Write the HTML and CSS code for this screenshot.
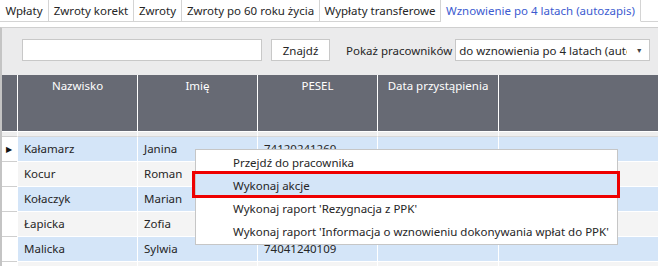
FILE: index.html
```html
<!DOCTYPE html>
<html lang="pl">
<head>
  <meta charset="UTF-8" />
  <title>Wznowienie po 4 latach</title>
  <link rel="stylesheet" href="styles.css">
</head>
<body>

  <div class="tabs">
    <div class="tab t1">Wpłaty</div>
    <div class="tab t2">Zwroty korekt</div>
    <div class="tab t3">Zwroty</div>
    <div class="tab t4">Zwroty po 60 roku życia</div>
    <div class="tab t5">Wypłaty transferowe</div>
    <div class="tab t6 active">Wznowienie po 4 latach (autozapis)</div>
    <div class="tab-rest"></div>
  </div>
  <div class="strip"></div>

  <div class="panel">
    <div class="toolbar">
      <input type="text" class="search">
      <button class="find">Znajdź</button>
      <span class="show-label">Pokaż pracowników</span>
      <div class="select">
        <span class="value">do wznowienia po 4 latach (autozapis)</span>
        <span class="arrow">▼</span>
      </div>
    </div>

    <div class="grid">
      <div class="row head">
        <div class="rh"></div>
        <div class="cell">Nazwisko</div>
        <div class="cell">Imię</div>
        <div class="cell">PESEL</div>
        <div class="cell">Data przystąpienia</div>
        <div class="cell"></div>
      </div>
      <div class="row filter">
        <div class="rh"></div>
        <div class="cell"></div>
        <div class="cell"></div>
        <div class="cell"></div>
        <div class="cell"></div>
        <div class="cell"></div>
      </div>
      <div class="row blue">
        <div class="rh"><span class="current">▶</span></div>
        <div class="cell">Kałamarz</div>
        <div class="cell">Janina</div>
        <div class="cell">74120241260</div>
        <div class="cell"></div>
        <div class="cell"></div>
      </div>
      <div class="row grey">
        <div class="rh"></div>
        <div class="cell">Kocur</div>
        <div class="cell">Roman</div>
        <div class="cell"></div>
        <div class="cell"></div>
        <div class="cell"></div>
      </div>
      <div class="row blue">
        <div class="rh"></div>
        <div class="cell">Kołaczyk</div>
        <div class="cell">Marian</div>
        <div class="cell"></div>
        <div class="cell"></div>
        <div class="cell"></div>
      </div>
      <div class="row grey">
        <div class="rh"></div>
        <div class="cell">Łapicka</div>
        <div class="cell">Zofia</div>
        <div class="cell"></div>
        <div class="cell"></div>
        <div class="cell"></div>
      </div>
      <div class="row blue">
        <div class="rh"></div>
        <div class="cell">Malicka</div>
        <div class="cell">Sylwia</div>
        <div class="cell">74041240109</div>
        <div class="cell"></div>
        <div class="cell"></div>
      </div>
      <div class="row grey">
        <div class="rh"></div>
        <div class="cell"></div>
        <div class="cell"></div>
        <div class="cell"></div>
        <div class="cell"></div>
        <div class="cell"></div>
      </div>
    </div>
  </div>

  <div class="context-menu">
    <div class="item">Przejdź do pracownika</div>
    <div class="item hover">Wykonaj akcje</div>
    <div class="item">Wykonaj raport 'Rezygnacja z PPK'</div>
    <div class="item">Wykonaj raport 'Informacja o wznowieniu dokonywania wpłat do PPK'</div>
  </div>
  <div class="mark"></div>

</body>
</html>
```

FILE: styles.css
```css
body {
  margin: 0;
  width: 658px;
  height: 266px;
  overflow: hidden;
  background-color: #ffffff;
  color: #262626;
  font-family: "Noto Sans", "Open Sans", sans-serif;
  font-size: 11.5px;
  position: relative;
}
.tabs {
  display: flex;
  height: 22px;
}
.tab {
  box-sizing: border-box;
  text-align: center;
  line-height: 22px;
  border-right: 1px solid #d4d4d4;
  border-bottom: 1px solid #d4d4d4;
  white-space: nowrap;
}
.t1 { width: 49px; }
.t2 { width: 85px; }
.t3 { width: 48px; }
.t4 { width: 138px; }
.t5 { width: 121px; }
.t6 { width: 200px; }
.tab.active {
  color: #3c5bd0;
  border-bottom-color: #ffffff;
}
.tab-rest {
  flex: 1;
  border-bottom: 1px solid #d4d4d4;
}
.strip {
  height: 5px;
}
.panel {
  background-color: #ebebec;
  border-top: 1px solid #cfcfcf;
  border-left: 2px solid #c4c4c4;
  height: 238px;
  overflow: hidden;
}
.toolbar {
  display: flex;
  align-items: center;
  padding: 11px 0 14px 20px;
  height: 22px;
}
.search {
  width: 240px;
  height: 22px;
  box-sizing: border-box;
  border: 1px solid #c8c8c8;
  background: #ffffff;
  margin: 0;
  padding: 0;
}
.find {
  width: 59px;
  height: 22px;
  margin-left: 9px;
  border: 1px solid #c8c8c8;
  background: #ffffff;
  font-family: inherit;
  font-size: 11.5px;
  color: #262626;
  padding: 0;
}
.show-label {
  margin-left: 16px;
  white-space: nowrap;
}
.select {
  margin-left: 3px;
  width: 195px;
  height: 22px;
  box-sizing: border-box;
  border: 1px solid #c8c8c8;
  background: #ffffff;
  display: flex;
  align-items: center;
  padding-left: 3px;
  white-space: nowrap;
}
.select .value {
  width: 168px;
  overflow: hidden;
}
.select .arrow {
  font-size: 7px;
  margin-left: auto;
  width: 20px;
  text-align: center;
  color: #444;
}
.grid {
  margin-left: -2px;
}
.row {
  display: grid;
  grid-template-columns: 17px 120px 120px 120px 121px 1fr;
  height: 25px;
}
.row .cell {
  border-left: 1px solid #ffffff;
  border-bottom: 1px solid #ffffff;
  padding-left: 6px;
  line-height: 24px;
  white-space: nowrap;
}
.row .rh {
  border-left: 2px solid #c4c4c4;
  border-bottom: 1px solid #cfcfcf;
  background: #ffffff;
  position: relative;
}
.row.head {
  height: 56px;
  background-color: #676a74;
  color: #ffffff;
}
.row.head .rh {
  background: #676a74;
  border: none;
}
.row.head .cell {
  text-align: center;
  padding: 0;
  line-height: 22px;
  border-bottom: none;
}
.row.filter {
  height: 5px;
  border-top: 1px solid #ffffff;
  background: #eeeeee;
}
.row.filter .cell {
  border-bottom: 1px solid #d8d8d8;
}
.row.filter .rh {
  background: #eeeeee;
  border-bottom: 1px solid #cfcfcf;
}
.row.blue .cell {
  background-color: #d4e5f8;
}
.row.grey .cell {
  background-color: #f4f4f4;
}
.current {
  position: absolute;
  left: 4px;
  top: 6px;
  font-size: 8px;
  color: #111;
}
.context-menu {
  position: absolute;
  left: 195px;
  top: 149px;
  width: 421px;
  background: #ffffff;
  border: 1px solid #c6c6c6;
  padding: 1px 0;
}
.context-menu .item {
  height: 23px;
  line-height: 23px;
  padding-left: 37px;
  white-space: nowrap;
}
.context-menu .item.hover {
  background-color: #d4e5f8;
}
.mark {
  position: absolute;
  left: 192px;
  top: 171px;
  width: 422px;
  height: 21px;
  border: 3px solid #ee0000;
}
```
